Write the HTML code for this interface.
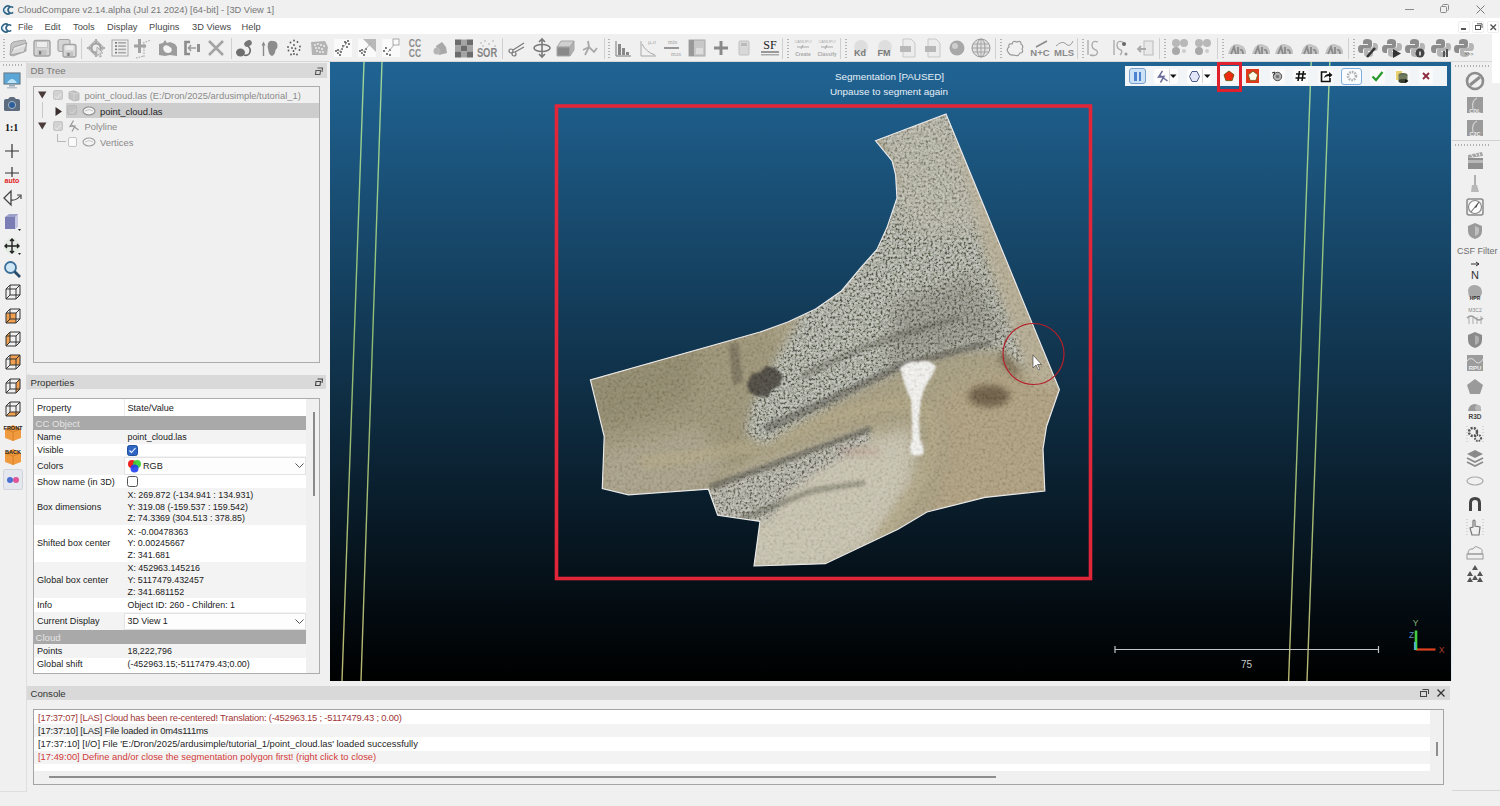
<!DOCTYPE html>
<html><head><meta charset="utf-8">
<style>
*{box-sizing:border-box;margin:0;padding:0}
html,body{width:1500px;height:806px;overflow:hidden;background:#f0f0f0;font-family:"Liberation Sans",sans-serif;font-size:9.4px;color:#1a1a1a}
.a{position:absolute}
.t{position:absolute;white-space:pre;line-height:1}
svg{position:absolute;overflow:visible}
#title{left:0;top:0;width:1500px;height:18px;background:#f0f0f0}
#menu{left:0;top:18px;width:1500px;height:16px;background:#fff}
#tb{left:0;top:34px;width:1492px;height:28px;background:#f0f0f0;border-bottom:1px solid #d8d8d8}
#tbw{left:1492px;top:34px;width:8px;height:49px;background:#fff}
#view{left:330px;top:62px;width:1121px;height:619px;background:linear-gradient(#206494,#000);overflow:hidden}
.hdr{position:absolute;background:#d9d9d9;color:#6e6e6e}
.vs{position:absolute;width:1px;background:#cfcfcf}
.dots{position:absolute;width:2px;background:repeating-linear-gradient(#b4b4b4 0 1px,transparent 1px 3px)}
.hdots{position:absolute;height:2px;background:repeating-linear-gradient(90deg,#b0b0b0 0 1px,transparent 1px 3px)}
.row{position:absolute;left:0;width:272px}
.pk{position:absolute;left:3px;white-space:pre;line-height:1}
.pv{position:absolute;left:93.5px;white-space:pre;line-height:1}
.con{position:absolute;left:4px;white-space:pre;line-height:1;font-size:9.38px}
</style></head><body>
<div id="title" class="a"></div>
<div id="menu" class="a"></div>
<div id="tb" class="a"></div>
<div id="tbw" class="a"></div>
<!-- title -->
<svg style="left:1.5px;top:4.5px" width="12" height="10" viewBox="0 0 12 10"><path d="M8.3 2A3.9 3.9 0 1 0 8.3 8" fill="none" stroke="#2f6386" stroke-width="1.7"/><path d="M11.2 2.6A3.1 3.1 0 1 0 11.2 7.4" fill="none" stroke="#2f6386" stroke-width="1.6"/><path d="M3 3.5Q2.6 5 3 6.5" stroke="#9fd4ee" stroke-width="0.9" fill="none"/></svg>
<div class="t" style="left:17.5px;top:5.8px;font-size:9.3px;color:#777">CloudCompare v2.14.alpha (Jul 21 2024) [64-bit] - [3D View 1]</div>
<div class="a" style="left:1405px;top:9px;width:9px;height:1px;background:#8a8a8a"></div>
<svg style="left:1440px;top:4px" width="10" height="10"><rect x="0.5" y="2.5" width="6" height="6" rx="1" fill="none" stroke="#8a8a8a"/><path d="M2.5 2.5V1.5Q2.5 0.5 3.5 0.5H7.5Q8.5 0.5 8.5 1.5V5.5Q8.5 6.5 7.5 6.5" fill="none" stroke="#8a8a8a"/></svg>
<svg style="left:1476px;top:5px" width="10" height="10"><path d="M0.5 0.5L8.5 8.5M8.5 0.5L0.5 8.5" stroke="#7a7a7a" stroke-width="1"/></svg>
<!-- menu -->
<svg style="left:-0.5px;top:22.5px" width="12" height="10" viewBox="0 0 12 10"><path d="M8.3 2A3.9 3.9 0 1 0 8.3 8" fill="none" stroke="#2f6386" stroke-width="1.7"/><path d="M11.2 2.6A3.1 3.1 0 1 0 11.2 7.4" fill="none" stroke="#2f6386" stroke-width="1.6"/><path d="M3 3.5Q2.6 5 3 6.5" stroke="#9fd4ee" stroke-width="0.9" fill="none"/></svg>
<div class="t" style="left:18px;top:22.5px;font-size:9.3px;color:#484848">File</div>
<div class="t" style="left:44.5px;top:22.5px;font-size:9.3px;color:#484848">Edit</div>
<div class="t" style="left:73px;top:22.5px;font-size:9.3px;color:#484848">Tools</div>
<div class="t" style="left:107px;top:22.5px;font-size:9.3px;color:#484848">Display</div>
<div class="t" style="left:149px;top:22.5px;font-size:9.3px;color:#484848">Plugins</div>
<div class="t" style="left:192px;top:22.5px;font-size:9.3px;color:#484848">3D Views</div>
<div class="t" style="left:241.5px;top:22.5px;font-size:9.3px;color:#484848">Help</div>
<div class="a" style="left:1458px;top:21px;width:12px;height:12px;background:#fff;border:1px solid #eee;border-radius:2px"></div>
<div class="a" style="left:1461px;top:28px;width:5px;height:2px;background:#555"></div>
<div class="a" style="left:1472px;top:21px;width:12px;height:12px;background:#fff;border:1px solid #eee;border-radius:2px"></div>
<svg style="left:1475px;top:23px" width="8" height="8"><rect x="0.5" y="2.5" width="5" height="4" fill="none" stroke="#555"/><path d="M2 0.8H7V5" fill="none" stroke="#555"/></svg>
<div class="a" style="left:1487px;top:21px;width:12px;height:12px;background:#fff;border:1px solid #eee;border-radius:2px"></div>
<svg style="left:1490px;top:24px" width="7" height="7"><path d="M0.5 0.5L6 6M6 0.5L0.5 6" stroke="#555" stroke-width="1.4"/></svg>
<svg style="left:8.0px;top:38.0px" width="20" height="20" viewBox="0 0 20 20"><path d="M3 6L5 4L10 3L17 2L18 4L18 13L5 18L2 17Z" fill="#c4c4c4" stroke="#a6a6a6" stroke-width="1"/><path d="M2 17L6 9L19 5L16 14Z" fill="#dcdcdc" stroke="#a4a4a4" stroke-width="1"/><path d="M6 11L17 7" stroke="#eeeeee" stroke-width="1.2"/></svg>
<svg style="left:32.0px;top:38.0px" width="20" height="20" viewBox="0 0 20 20"><rect x="2" y="2.5" width="16" height="15.5" rx="2" fill="#d4d4d4" stroke="#a2a2a2" stroke-width="1.4"/><rect x="4.5" y="3.5" width="11" height="6" fill="#ececec" stroke="#bdbdbd" stroke-width="0.8"/><rect x="5.5" y="12" width="9" height="5" fill="#c2c2c2"/><rect x="7" y="13" width="2.2" height="3.5" fill="#7c7c7c"/></svg>
<svg style="left:57.0px;top:38.0px" width="20" height="20" viewBox="0 0 20 20"><rect x="1" y="1.5" width="12" height="12" rx="2" fill="#d4d4d4" stroke="#a6a6a6" stroke-width="1.2"/><rect x="6" y="6.5" width="13" height="12.5" rx="2" fill="#d6d6d6" stroke="#a2a2a2" stroke-width="1.3"/><rect x="8.5" y="7.5" width="8" height="4.5" fill="#ececec"/><rect x="9" y="14" width="7" height="4" fill="#c2c2c2"/><rect x="10.5" y="15" width="2" height="3" fill="#7c7c7c"/></svg>
<svg style="left:86.0px;top:38.0px" width="20" height="20" viewBox="0 0 20 20"><path d="M10 1V5M10 15V19M1 10H5M15 10H19" stroke="#a8a8a8" stroke-width="2"/><path d="M10 2L18 10L10 18L2 10Z" fill="none" stroke="#b4b4b4" stroke-width="1.3"/><circle cx="10" cy="10" r="4.5" fill="#ececec" stroke="#a0a0a0" stroke-width="2"/><path d="M11 9L17 15L14 15.5L15.5 18.5L13.5 19L12.5 16L10.5 18Z" fill="#dedede" stroke="#a8a8a8" stroke-width="0.8"/></svg>
<svg style="left:110.0px;top:38.0px" width="20" height="20" viewBox="0 0 20 20"><rect x="2" y="2" width="16" height="16" fill="#eee" stroke="#a8a8a8"/><rect x="5" y="4.0" width="2" height="1.6" fill="#7a7a7a"/><rect x="8" y="4.0" width="8" height="1.6" fill="#a8a8a8"/><rect x="5" y="7.3" width="2" height="1.6" fill="#7a7a7a"/><rect x="8" y="7.3" width="8" height="1.6" fill="#a8a8a8"/><rect x="5" y="10.6" width="2" height="1.6" fill="#7a7a7a"/><rect x="8" y="10.6" width="8" height="1.6" fill="#a8a8a8"/><rect x="5" y="13.9" width="2" height="1.6" fill="#7a7a7a"/><rect x="8" y="13.9" width="8" height="1.6" fill="#a8a8a8"/></svg>
<svg style="left:133.0px;top:38.0px" width="20" height="20" viewBox="0 0 20 20"><path d="M6.5 1V15M1 8H13" stroke="#a2a2a2" stroke-width="3"/><path d="M10 5L18 2M11 6V19M3 20L11 18" stroke="#a8a8a8" stroke-width="1.1" stroke-dasharray="1.6 1.2"/></svg>
<svg style="left:158.0px;top:38.0px" width="20" height="20" viewBox="0 0 20 20"><path d="M1 17L1 6L5 5L7 2L9 5L12 4L17 6L19 9L19 18L12 17L7 18Z" fill="#9c9c9c"/><path d="M6 8Q9 6 12 9Q15 11 13 14Q10 16 7 14Q4 11 6 8Z" fill="#f4f4f4"/></svg>
<svg style="left:183.0px;top:38.0px" width="20" height="20" viewBox="0 0 20 20"><path d="M7 4H2.5V16H7" fill="none" stroke="#8c8c8c" stroke-width="2.6"/><path d="M5.5 10H13M8 7L5.5 10L8 13" fill="none" stroke="#9a9a9a" stroke-width="1.6"/><rect x="14" y="6" width="3" height="8" fill="#909090"/></svg>
<svg style="left:206.0px;top:38.0px" width="20" height="20" viewBox="0 0 20 20"><path d="M3 3L17 17M17 3L3 17" stroke="#a4a4a4" stroke-width="2.6"/></svg>
<svg style="left:235.0px;top:38.0px" width="20" height="20" viewBox="0 0 20 20"><ellipse cx="5.5" cy="14.5" rx="4.5" ry="4" fill="#6e6e6e"/><ellipse cx="13" cy="5.5" rx="4" ry="3" transform="rotate(-30 13 5.5)" fill="#767676"/><path d="M13 8Q17 12 14 16Q12 18 9 17" fill="none" stroke="#6e6e6e" stroke-width="1.6"/></svg>
<svg style="left:260.0px;top:38.0px" width="20" height="20" viewBox="0 0 20 20"><path d="M3.5 18V6" stroke="#8a8a8a" stroke-width="1.4"/><path d="M1.5 7.5L3.5 3.5L5.5 7.5Z" fill="#8a8a8a"/><path d="M8 5Q10 2 13 3Q17 3 17.5 7Q18 10 15.5 12Q15 17 12 18Q9 17 8.5 13Q7 9 8 5Z" fill="#8c8c8c"/></svg>
<svg style="left:284.0px;top:38.0px" width="20" height="20" viewBox="0 0 20 20"><circle cx="10" cy="2.5" r="0.9" fill="#555"/><circle cx="13.5" cy="4" r="0.9" fill="#555"/><circle cx="6.5" cy="4.5" r="0.9" fill="#555"/><circle cx="4" cy="9" r="0.9" fill="#555"/><circle cx="16" cy="8.5" r="0.9" fill="#555"/><circle cx="4.5" cy="12.5" r="0.9" fill="#555"/><circle cx="15.5" cy="12" r="0.9" fill="#555"/><circle cx="7" cy="16.5" r="0.9" fill="#555"/><circle cx="10" cy="16" r="0.9" fill="#555"/><circle cx="13" cy="16.5" r="0.9" fill="#555"/><circle cx="8" cy="10" r="0.9" fill="#555"/><circle cx="11.5" cy="10.5" r="0.9" fill="#555"/><circle cx="10" cy="7" r="0.9" fill="#555"/><circle cx="9.5" cy="13" r="0.9" fill="#555"/></svg>
<svg style="left:309.0px;top:38.0px" width="20" height="20" viewBox="0 0 20 20"><path d="M2 4L16 3L19 9L18 17L3 17Z" fill="#b4b4b4"/><circle cx="6" cy="7" r="1" fill="#eeeeee"/><circle cx="9" cy="6" r="1" fill="#eeeeee"/><circle cx="12" cy="7" r="1" fill="#eeeeee"/><circle cx="15" cy="8" r="1" fill="#eeeeee"/><circle cx="7" cy="10" r="1" fill="#eeeeee"/><circle cx="10" cy="10" r="1" fill="#eeeeee"/><circle cx="13" cy="11" r="1" fill="#eeeeee"/><circle cx="8" cy="13" r="1" fill="#eeeeee"/><circle cx="11" cy="14" r="1" fill="#eeeeee"/><circle cx="14" cy="14" r="1" fill="#eeeeee"/></svg>
<svg style="left:333.0px;top:38.0px" width="20" height="20" viewBox="0 0 20 20"><rect x="1" y="1" width="18" height="18" fill="#fafafa"/><circle cx="3" cy="13" r="1" fill="#555"/><circle cx="5" cy="15" r="1" fill="#555"/><circle cx="7" cy="17" r="1" fill="#555"/><circle cx="5" cy="12" r="1" fill="#555"/><circle cx="9" cy="11" r="1" fill="#555"/><circle cx="10" cy="8" r="1" fill="#555"/><circle cx="13" cy="5" r="1" fill="#555"/><circle cx="15" cy="3" r="1" fill="#555"/><circle cx="12" cy="4" r="1" fill="#555"/><circle cx="16" cy="6" r="1" fill="#555"/><circle cx="14" cy="9" r="1" fill="#555"/><circle cx="8" cy="14" r="1" fill="#555"/><path d="M5 15L14 5" stroke="#a8a8a8"/></svg>
<svg style="left:357.0px;top:38.0px" width="20" height="20" viewBox="0 0 20 20"><rect x="1" y="1" width="18" height="18" fill="#fafafa"/><path d="M6 1H19V14Z" fill="#b8b8b8"/><circle cx="3" cy="13" r="1" fill="#555"/><circle cx="5" cy="15" r="1" fill="#555"/><circle cx="7" cy="17" r="1" fill="#555"/><circle cx="5" cy="12" r="1" fill="#555"/><circle cx="9" cy="11" r="1" fill="#555"/><circle cx="8" cy="14" r="1" fill="#555"/><path d="M5 15L14 5" stroke="#a8a8a8"/></svg>
<svg style="left:381.0px;top:38.0px" width="20" height="20" viewBox="0 0 20 20"><rect x="1" y="1" width="18" height="18" fill="#fafafa"/><rect x="12" y="1" width="6" height="6" fill="none" stroke="#a8a8a8"/><circle cx="3" cy="13" r="1" fill="#555"/><circle cx="6" cy="16" r="1" fill="#555"/><circle cx="9" cy="17" r="1" fill="#555"/><circle cx="5" cy="10" r="1" fill="#555"/><circle cx="9" cy="12" r="1" fill="#555"/><path d="M7 14L13 7" stroke="#a8a8a8"/></svg>
<svg style="left:405.0px;top:38.0px" width="20" height="20" viewBox="0 0 20 20"><text x="10" y="9.5" font-size="10" font-weight="bold" text-anchor="middle" fill="#8a8a8a" font-family="Liberation Sans" transform="translate(10 0) scale(0.85 1) translate(-10 0)">CC</text><text x="10" y="19" font-size="10" font-weight="bold" text-anchor="middle" fill="#8a8a8a" font-family="Liberation Sans" transform="translate(10 0) scale(0.85 1) translate(-10 0)">CC</text></svg>
<svg style="left:430.0px;top:38.0px" width="20" height="20" viewBox="0 0 20 20"><path d="M6 8L12 4L16 9L17 15L9 17Z" fill="#a8a8a8"/><circle cx="7" cy="13" r="3.5" fill="#b5b5b5"/></svg>
<svg style="left:454.0px;top:38.0px" width="20" height="20" viewBox="0 0 20 20"><rect x="1" y="1.5" width="6" height="6" fill="#6c6c6c"/><rect x="1" y="7.5" width="6" height="6" fill="#a4a4a4"/><rect x="1" y="13.5" width="6" height="6" fill="#6c6c6c"/><rect x="7" y="1.5" width="6" height="6" fill="#a4a4a4"/><rect x="7" y="7.5" width="6" height="6" fill="#6c6c6c"/><rect x="7" y="13.5" width="6" height="6" fill="#a4a4a4"/><rect x="13" y="1.5" width="6" height="6" fill="#6c6c6c"/><rect x="13" y="7.5" width="6" height="6" fill="#a4a4a4"/><rect x="13" y="13.5" width="6" height="6" fill="#6c6c6c"/></svg>
<svg style="left:477.0px;top:38.0px" width="20" height="20" viewBox="0 0 20 20"><text x="10" y="19" font-size="12" font-weight="bold" text-anchor="middle" fill="#858585" font-family="Liberation Sans" transform="translate(10 0) scale(0.78 1) translate(-10 0)">SOR</text><circle cx="4" cy="5" r="0.7" fill="#9a9a9a"/><circle cx="8" cy="3" r="0.7" fill="#9a9a9a"/><circle cx="12" cy="6" r="0.7" fill="#9a9a9a"/><circle cx="16" cy="3" r="0.7" fill="#9a9a9a"/><circle cx="18" cy="8" r="0.7" fill="#9a9a9a"/><circle cx="6" cy="8" r="0.7" fill="#9a9a9a"/></svg>
<svg style="left:507.0px;top:38.0px" width="20" height="20" viewBox="0 0 20 20"><circle cx="4" cy="13" r="2" fill="none" stroke="#7a7a7a" stroke-width="1.2"/><circle cx="7" cy="16" r="2" fill="none" stroke="#7a7a7a" stroke-width="1.2"/><path d="M6 12L17 5M8 14L17 9" stroke="#7a7a7a" stroke-width="1.2"/></svg>
<svg style="left:532.0px;top:38.0px" width="20" height="20" viewBox="0 0 20 20"><path d="M10 1V19M7 4L10 1L13 4M7 16L10 19L13 16" fill="none" stroke="#7a7a7a" stroke-width="1.6"/><ellipse cx="10" cy="10" rx="8" ry="3.5" fill="none" stroke="#7a7a7a" stroke-width="1.6"/></svg>
<svg style="left:555.0px;top:38.0px" width="20" height="20" viewBox="0 0 20 20"><path d="M2 9L6 3H19L15 9Z" fill="#d0d0d0" stroke="#a8a8a8"/><path d="M2 9H15V18H2Z" fill="#8a8a8a" stroke="#a8a8a8"/><path d="M15 9L19 3V12L15 18Z" fill="#b0b0b0" stroke="#a8a8a8"/></svg>
<svg style="left:580.0px;top:38.0px" width="20" height="20" viewBox="0 0 20 20"><path d="M5 17L9 9L14 14L17 10M9 9L8 3M9 9L3 12" fill="none" stroke="#a8a8a8" stroke-width="1.8"/></svg>
<svg style="left:613.0px;top:38.0px" width="20" height="20" viewBox="0 0 20 20"><path d="M3 3V18H18" fill="none" stroke="#7a7a7a" stroke-width="1"/><rect x="5" y="6" width="3" height="11" fill="#888"/><rect x="9" y="10" width="3" height="7" fill="#888"/><rect x="13" y="14" width="3" height="3" fill="#888"/></svg>
<svg style="left:638.0px;top:38.0px" width="20" height="20" viewBox="0 0 20 20"><path d="M3 3V18H18" fill="none" stroke="#a8a8a8" stroke-width="1"/><path d="M4 6Q8 14 17 17" fill="none" stroke="#a8a8a8"/><text x="10" y="6" font-size="6" fill="#a8a8a8" font-family="Liberation Serif">μ,σ</text></svg>
<svg style="left:662.0px;top:38.0px" width="20" height="20" viewBox="0 0 20 20"><text x="6" y="6" font-size="6" fill="#a8a8a8" font-family="Liberation Serif">min</text><path d="M2 10H17" stroke="#7a7a7a" stroke-width="1.5"/><text x="9" y="18" font-size="6" fill="#a8a8a8" font-family="Liberation Serif">max</text></svg>
<svg style="left:687.0px;top:38.0px" width="20" height="20" viewBox="0 0 20 20"><rect x="2" y="2" width="16" height="16" fill="#c8c8c8" stroke="#a8a8a8"/><rect x="2" y="2" width="5" height="16" fill="#999"/><rect x="9" y="10" width="7" height="6" fill="#ddd"/></svg>
<svg style="left:711.0px;top:38.0px" width="20" height="20" viewBox="0 0 20 20"><path d="M10 3V17M3 10H17" stroke="#8a8a8a" stroke-width="3"/></svg>
<svg style="left:734.0px;top:38.0px" width="20" height="20" viewBox="0 0 20 20"><rect x="5" y="3" width="10" height="14" rx="1" fill="#d8d8d8" stroke="#c0c0c0"/><rect x="7" y="5" width="6" height="3" fill="#bbb"/></svg>
<svg style="left:760.0px;top:38.0px" width="20" height="20" viewBox="0 0 20 20"><text x="10" y="11" font-size="12" text-anchor="middle" fill="#222" font-family="Liberation Serif">SF</text><rect x="1" y="13" width="18" height="2" fill="#999"/><rect x="1" y="16" width="18" height="1.5" fill="#aaa"/></svg>
<svg style="left:793.0px;top:38.0px" width="20" height="20" viewBox="0 0 20 20"><text x="10" y="5" font-size="4" text-anchor="middle" fill="#aaa" font-family="Liberation Sans">CANUPO</text><path d="M4 9H16M10 7L8 11" stroke="#a8a8a8"/><text x="10" y="18" font-size="5" font-weight="bold" text-anchor="middle" fill="#a8a8a8" font-family="Liberation Sans">Create</text></svg>
<svg style="left:817.0px;top:38.0px" width="20" height="20" viewBox="0 0 20 20"><text x="10" y="5" font-size="4" text-anchor="middle" fill="#aaa" font-family="Liberation Sans">CANUPO</text><path d="M4 9H16M10 7L8 11" stroke="#a8a8a8"/><text x="10" y="18" font-size="5" font-weight="bold" text-anchor="middle" fill="#a8a8a8" font-family="Liberation Sans">Classify</text></svg>
<svg style="left:850.0px;top:38.0px" width="20" height="20" viewBox="0 0 20 20"><circle cx="11" cy="9" r="7" fill="#dedede"/><text x="10" y="18" font-size="9" font-weight="bold" text-anchor="middle" fill="#7a7a7a" font-family="Liberation Sans">Kd</text></svg>
<svg style="left:874.0px;top:38.0px" width="20" height="20" viewBox="0 0 20 20"><circle cx="11" cy="9" r="7" fill="#dedede"/><text x="10" y="18" font-size="9" font-weight="bold" text-anchor="middle" fill="#7a7a7a" font-family="Liberation Sans">FM</text></svg>
<svg style="left:898.0px;top:38.0px" width="20" height="20" viewBox="0 0 20 20"><path d="M5 1H13L17 5V19H5Z" fill="#ececec" stroke="#c8c8c8"/><rect x="2" y="8" width="11" height="6" fill="#b8b8b8"/></svg>
<svg style="left:923.0px;top:38.0px" width="20" height="20" viewBox="0 0 20 20"><path d="M5 1H13L17 5V19H5Z" fill="#ececec" stroke="#c8c8c8"/><rect x="2" y="8" width="11" height="6" fill="#b8b8b8"/></svg>
<svg style="left:947.0px;top:38.0px" width="20" height="20" viewBox="0 0 20 20"><circle cx="10" cy="10" r="7.5" fill="#a8a8a8"/><circle cx="8" cy="8" r="3" fill="#cfcfcf"/></svg>
<svg style="left:971.0px;top:38.0px" width="20" height="20" viewBox="0 0 20 20"><circle cx="10" cy="10" r="9" fill="#e0e0e0" stroke="#9a9a9a"/><ellipse cx="10" cy="10" rx="4" ry="9" fill="none" stroke="#9a9a9a"/><path d="M1 10H19M2 6H18M2 14H18M10 1V19" stroke="#9a9a9a" stroke-width="0.8"/></svg>
<svg style="left:1005.0px;top:38.0px" width="20" height="20" viewBox="0 0 20 20"><path d="M3 14Q1 11 4 9Q3 5 7 6Q8 2 12 4Q16 2 16 6Q19 8 17 11Q19 15 15 15Q13 19 9 17Q5 18 3 14Z" fill="none" stroke="#9a9a9a" stroke-width="1.2"/></svg>
<svg style="left:1030.0px;top:38.0px" width="20" height="20" viewBox="0 0 20 20"><text x="10" y="18" font-size="9.5" font-weight="bold" text-anchor="middle" fill="#8a8a8a" font-family="Liberation Sans">N+C</text><path d="M6 9L17 3" stroke="#8a8a8a" stroke-width="1.5"/></svg>
<svg style="left:1054.0px;top:38.0px" width="20" height="20" viewBox="0 0 20 20"><text x="10" y="18" font-size="9.5" font-weight="bold" text-anchor="middle" fill="#8a8a8a" font-family="Liberation Sans">MLS</text><path d="M2 8Q8 2 12 6T19 3" fill="none" stroke="#9a9a9a"/></svg>
<svg style="left:1084.0px;top:38.0px" width="20" height="20" viewBox="0 0 20 20"><path d="M4 2V17M14 4Q8 2 8 7Q8 11 12 12Q15 14 12 17Q10 18 6 17" fill="none" stroke="#a8a8a8" stroke-width="1.3"/></svg>
<svg style="left:1110.0px;top:38.0px" width="20" height="20" viewBox="0 0 20 20"><path d="M4 2V17M13 4Q7 2 7 7Q7 11 11 12Q13 14 10 17" fill="none" stroke="#a8a8a8" stroke-width="1.3"/><circle cx="14" cy="6" r="2" fill="#666"/><circle cx="16" cy="16" r="1.5" fill="#999"/></svg>
<svg style="left:1136.0px;top:38.0px" width="20" height="20" viewBox="0 0 20 20"><rect x="8" y="3" width="9" height="14" fill="#e8e8e8" stroke="#bbb"/><path d="M2 11L10 11M5 8L2 11L5 14" fill="none" stroke="#aaa" stroke-width="1.8"/></svg>
<svg style="left:1170.0px;top:38.0px" width="20" height="20" viewBox="0 0 20 20"><circle cx="6" cy="5" r="4" fill="#b8b8b8"/><circle cx="14" cy="5" r="4" fill="#b8b8b8"/><circle cx="6" cy="13" r="4" fill="#a8a8a8"/><circle cx="14" cy="13" r="2" fill="#ccc"/></svg>
<svg style="left:1193.0px;top:38.0px" width="20" height="20" viewBox="0 0 20 20"><circle cx="6" cy="5" r="4" fill="#b8b8b8"/><circle cx="14" cy="5" r="4" fill="#b8b8b8"/><circle cx="6" cy="13" r="4" fill="#a8a8a8"/><circle cx="14" cy="13" r="2" fill="#ccc"/></svg>
<svg style="left:1227.0px;top:38.0px" width="20" height="20" viewBox="0 0 20 20"><path d="M1 16Q3 8 7 7Q10 5 13 7Q17 7 19 13L19 16Z" fill="#c4c4c4"/><path d="M4 16L7 9L9 16M11 9V16M13 12Q16 11 16 16" fill="none" stroke="#8a8a8a" stroke-width="1.8"/></svg>
<svg style="left:1251.0px;top:38.0px" width="20" height="20" viewBox="0 0 20 20"><path d="M1 16Q3 8 7 7Q10 5 13 7Q17 7 19 13L19 16Z" fill="#c4c4c4"/><path d="M4 16L7 9L9 16M11 9V16M13 12Q16 11 16 16" fill="none" stroke="#8a8a8a" stroke-width="1.8"/></svg>
<svg style="left:1274.0px;top:38.0px" width="20" height="20" viewBox="0 0 20 20"><path d="M1 16Q3 8 7 7Q10 5 13 7Q17 7 19 13L19 16Z" fill="#c4c4c4"/><path d="M4 16L7 9L9 16M11 9V16M13 12Q16 11 16 16" fill="none" stroke="#8a8a8a" stroke-width="1.8"/></svg>
<svg style="left:1300.0px;top:38.0px" width="20" height="20" viewBox="0 0 20 20"><path d="M1 16Q3 8 7 7Q10 5 13 7Q17 7 19 13L19 16Z" fill="#c4c4c4"/><path d="M4 16L7 9L9 16M11 9V16M13 12Q16 11 16 16" fill="none" stroke="#8a8a8a" stroke-width="1.8"/></svg>
<svg style="left:1324.0px;top:38.0px" width="20" height="20" viewBox="0 0 20 20"><path d="M1 16Q3 8 7 7Q10 5 13 7Q17 7 19 13L19 16Z" fill="#c4c4c4"/><path d="M4 16L7 9L9 16M11 9V16M13 12Q16 11 16 16" fill="none" stroke="#8a8a8a" stroke-width="1.8"/></svg>
<svg style="left:1358.0px;top:38.0px" width="20" height="20" viewBox="0 0 20 20"><path d="M9 1Q5 1 5 4V6H10V7H3Q0 7 0 11Q0 15 3 15H5V12Q5 10 8 10H12Q14 10 14 8V4Q14 1 9 1Z" fill="#8c8c8c"/><path d="M11 19Q15 19 15 16V14H10V13H17Q20 13 20 9Q20 5 17 5H15V8Q15 10 12 10H8Q6 10 6 12V16Q6 19 11 19Z" fill="#b4b4b4"/><path d="M9 19L17 10" stroke="#333" stroke-width="2.5"/></svg>
<svg style="left:1382.0px;top:38.0px" width="20" height="20" viewBox="0 0 20 20"><path d="M9 1Q5 1 5 4V6H10V7H3Q0 7 0 11Q0 15 3 15H5V12Q5 10 8 10H12Q14 10 14 8V4Q14 1 9 1Z" fill="#8c8c8c"/><path d="M11 19Q15 19 15 16V14H10V13H17Q20 13 20 9Q20 5 17 5H15V8Q15 10 12 10H8Q6 10 6 12V16Q6 19 11 19Z" fill="#b4b4b4"/><path d="M11 11V20L19 15.5Z" fill="#333"/></svg>
<svg style="left:1405.0px;top:38.0px" width="20" height="20" viewBox="0 0 20 20"><path d="M9 1Q5 1 5 4V6H10V7H3Q0 7 0 11Q0 15 3 15H5V12Q5 10 8 10H12Q14 10 14 8V4Q14 1 9 1Z" fill="#8c8c8c"/><path d="M11 19Q15 19 15 16V14H10V13H17Q20 13 20 9Q20 5 17 5H15V8Q15 10 12 10H8Q6 10 6 12V16Q6 19 11 19Z" fill="#b4b4b4"/><circle cx="15" cy="15" r="4.5" fill="#444"/><rect x="14.3" y="13.5" width="1.4" height="4" fill="#fff"/></svg>
<svg style="left:1431.0px;top:38.0px" width="20" height="20" viewBox="0 0 20 20"><path d="M9 1Q5 1 5 4V6H10V7H3Q0 7 0 11Q0 15 3 15H5V12Q5 10 8 10H12Q14 10 14 8V4Q14 1 9 1Z" fill="#8c8c8c"/><path d="M11 19Q15 19 15 16V14H10V13H17Q20 13 20 9Q20 5 17 5H15V8Q15 10 12 10H8Q6 10 6 12V16Q6 19 11 19Z" fill="#b4b4b4"/><rect x="12" y="13" width="2" height="6" fill="#555"/><rect x="15" y="11" width="2" height="8" fill="#555"/></svg>
<svg style="left:1454.0px;top:38.0px" width="20" height="20" viewBox="0 0 20 20"><path d="M9 1Q5 1 5 4V6H10V7H3Q0 7 0 11Q0 15 3 15H5V12Q5 10 8 10H12Q14 10 14 8V4Q14 1 9 1Z" fill="#8c8c8c"/><path d="M11 19Q15 19 15 16V14H10V13H17Q20 13 20 9Q20 5 17 5H15V8Q15 10 12 10H8Q6 10 6 12V16Q6 19 11 19Z" fill="#b4b4b4"/><text x="15" y="18" font-size="5" text-anchor="middle" fill="#555" font-family="Liberation Sans">&gt;&gt;&gt;</text></svg>
<div class="vs" style="left:604px;top:38px;height:21px"></div>
<div class="vs" style="left:81px;top:38px;height:21px"></div>
<div class="vs" style="left:231px;top:38px;height:21px"></div>
<div class="vs" style="left:502px;top:38px;height:21px"></div>
<div class="vs" style="left:782px;top:38px;height:21px"></div>
<div class="vs" style="left:840px;top:38px;height:21px"></div>
<div class="vs" style="left:995px;top:38px;height:21px"></div>
<div class="vs" style="left:1077px;top:38px;height:21px"></div>
<div class="vs" style="left:1159px;top:38px;height:21px"></div>
<div class="vs" style="left:1217px;top:38px;height:21px"></div>
<div class="vs" style="left:1348px;top:38px;height:21px"></div>
<div class="dots" style="left:3px;top:39px;height:19px"></div>
<div class="dots" style="left:608px;top:39px;height:19px"></div>
<div class="dots" style="left:787px;top:39px;height:19px"></div>
<div class="dots" style="left:845px;top:39px;height:19px"></div>
<div class="dots" style="left:1000px;top:39px;height:19px"></div>
<div class="dots" style="left:1082px;top:39px;height:19px"></div>
<div class="dots" style="left:1164px;top:39px;height:19px"></div>
<div class="dots" style="left:1222px;top:39px;height:19px"></div>
<div class="dots" style="left:1353px;top:39px;height:19px"></div>
<!-- left toolbar -->
<div class="a" style="left:26px;top:62px;width:1px;height:729px;background:#dedede"></div>
<div class="a" style="left:0;top:791px;width:27px;height:1px;background:#dedede"></div>
<div class="hdots" style="left:3px;top:64px;width:20px"></div>
<svg style="left:3px;top:72px" width="18" height="17" viewBox="0 0 18 17"><rect x="1" y="1" width="16" height="11" fill="#5aa6d6" stroke="#6a7f90" stroke-width="1.2"/><path d="M4 11Q9 3 14 11" fill="#bfe3f7"/><rect x="6" y="13" width="6" height="1.5" fill="#9aaab5"/><rect x="4" y="15" width="10" height="1.5" fill="#b5c0c8"/></svg>
<svg style="left:3px;top:96px" width="18" height="16" viewBox="0 0 18 16"><path d="M1 5Q1 3 3 3H5L7 1H11L13 3H15Q17 3 17 5V14Q17 15 15 15H3Q1 15 1 14Z" fill="#5c6b7d"/><circle cx="9" cy="9" r="3.6" fill="#2d5e9a" stroke="#a9b7c5" stroke-width="1"/></svg>
<div class="t" style="left:5px;top:123px;font-size:10px;font-weight:bold;font-family:'Liberation Serif';color:#111">1:1</div>
<svg style="left:4px;top:143px" width="16" height="16"><path d="M8 1V15M1 8H15" stroke="#333" stroke-width="1.2"/></svg>
<svg style="left:4px;top:167px" width="16" height="16"><path d="M8 0V10M1 6H15" stroke="#333" stroke-width="1.2"/><text x="8" y="15.5" font-size="7" font-weight="bold" text-anchor="middle" fill="#e02020" font-family="Liberation Sans">auto</text></svg>
<svg style="left:3px;top:190px" width="19" height="16"><path d="M8 1V15L1 8Z" fill="none" stroke="#444" stroke-width="1.3"/><path d="M8 10Q13 11 17 6M14 5H18V9" fill="none" stroke="#444" stroke-width="1.2"/></svg>
<svg style="left:3px;top:213px" width="19" height="19"><path d="M2 4L6 1H15V13L12 16H2Z" fill="#9d9fc8"/><path d="M2 4H12V16H2Z" fill="#7b7db5"/><path d="M12 4L15 1V13L12 16Z" fill="#c6c7e2"/><path d="M15 16L18 16L16.5 18Z" fill="#222"/></svg>
<svg style="left:3px;top:237px" width="19" height="19"><circle cx="9" cy="9" r="8" fill="#e3ebe3"/><path d="M9 2V16M2 9H16M7 4L9 2L11 4M7 14L9 16L11 14M4 7L2 9L4 11M14 7L16 9L14 11" fill="none" stroke="#222" stroke-width="1.4"/><path d="M15 16L18 16L16.5 18Z" fill="#222"/></svg>
<svg style="left:3px;top:260px" width="19" height="19"><circle cx="7.5" cy="7.5" r="5.5" fill="#cfe6f5" stroke="#3b6f9a" stroke-width="1.8"/><path d="M11.5 11.5L17 17" stroke="#2a4a6a" stroke-width="2.8"/></svg>
<svg style="left:4px;top:283px" width="18" height="18" viewBox="0 0 18 18"><path d="M2 6H12V16H2ZM6 2H16V12H6ZM2 6L6 2M12 6L16 2M12 16L16 12M2 16L6 12" fill="none" stroke="#333" stroke-width="1"/></svg>
<svg style="left:4px;top:307px" width="18" height="18" viewBox="0 0 18 18"><path d="M2 6H12V16H2Z" fill="#f0a050"/><path d="M2 6H12V16H2ZM6 2H16V12H6ZM2 6L6 2M12 6L16 2M12 16L16 12M2 16L6 12" fill="none" stroke="#333" stroke-width="1"/></svg>
<svg style="left:4px;top:330px" width="18" height="18" viewBox="0 0 18 18"><path d="M2 6L6 2V12L2 16Z" fill="#f0a050"/><path d="M2 6H12V16H2ZM6 2H16V12H6ZM2 6L6 2M12 6L16 2M12 16L16 12M2 16L6 12" fill="none" stroke="#333" stroke-width="1"/></svg>
<svg style="left:4px;top:353px" width="18" height="18" viewBox="0 0 18 18"><path d="M6 2H16V12H6Z" fill="#f0a050"/><path d="M2 6H12V16H2ZM6 2H16V12H6ZM2 6L6 2M12 6L16 2M12 16L16 12M2 16L6 12" fill="none" stroke="#333" stroke-width="1"/></svg>
<svg style="left:4px;top:377px" width="18" height="18" viewBox="0 0 18 18"><path d="M12 6L16 2V12L12 16Z" fill="#f0a050"/><path d="M2 6H12V16H2ZM6 2H16V12H6ZM2 6L6 2M12 6L16 2M12 16L16 12M2 16L6 12" fill="none" stroke="#333" stroke-width="1"/></svg>
<svg style="left:4px;top:400px" width="18" height="18" viewBox="0 0 18 18"><path d="M2 16L6 12H16L12 16Z" fill="#f0a050"/><path d="M2 6H12V16H2ZM6 2H16V12H6ZM2 6L6 2M12 6L16 2M12 16L16 12M2 16L6 12" fill="none" stroke="#333" stroke-width="1"/></svg>
<svg style="left:3px;top:422px" width="20" height="20" viewBox="0 0 20 20"><path d="M2 7L10 3L18 7V16L10 19L2 16Z" fill="#f09a40"/><path d="M2 7L10 10L18 7M10 10V19" fill="none" stroke="#d07a20" stroke-width="0.8"/><text x="10" y="8" font-size="5.5" font-weight="bold" text-anchor="middle" fill="#222" font-family="Liberation Sans">FRONT</text></svg>
<svg style="left:3px;top:446px" width="20" height="20" viewBox="0 0 20 20"><path d="M2 7L10 3L18 7V16L10 19L2 16Z" fill="#f09a40"/><path d="M2 7L10 10L18 7M10 10V19" fill="none" stroke="#d07a20" stroke-width="0.8"/><text x="10" y="8" font-size="5.5" font-weight="bold" text-anchor="middle" fill="#222" font-family="Liberation Sans">BACK</text></svg>
<div class="a" style="left:3px;top:469px;width:20px;height:21px;background:#e4e8ee;border:1px solid #d2d6dc;border-radius:2px"></div><div class="a" style="left:6.5px;top:477px;width:6px;height:6px;border-radius:50%;background:#4b6fd0"></div><div class="a" style="left:13px;top:477px;width:6px;height:6px;border-radius:50%;background:#e0559a"></div>
<!-- DB tree dock -->
<div class="hdr" style="left:26px;top:63px;width:301px;height:15px"></div>
<div class="t" style="left:30.5px;top:66px;font-size:9.6px;color:#777">DB Tree</div>
<svg style="left:315px;top:66.5px" width="8" height="8"><path d="M1 3.5H5.5L5 7.5H0.5Z" fill="none" stroke="#555" stroke-width="1.1"/><path d="M2.5 1H7.5L7 5" fill="none" stroke="#555" stroke-width="1.1"/></svg>
<div class="a" style="left:33px;top:86px;width:287px;height:277px;border:1px solid #acacac;background:#f0f0f0"></div>
<div class="a" style="left:66px;top:103px;width:253px;height:15px;background:#cdcdcd"></div>
<svg style="left:38px;top:91px" width="9" height="8"><path d="M0 0.5H8.5L4.25 7.5Z" fill="#4b3b3b"/></svg>
<svg style="left:38px;top:122px" width="9" height="8"><path d="M0 0.5H8.5L4.25 7.5Z" fill="#4b3b3b"/></svg>
<svg style="left:55px;top:106.5px" width="8" height="9"><path d="M0.5 0H7.5L0.5 0Z M0.5 0L7 4.5L0.5 9Z" fill="#3b2e2e"/></svg>
<div class="a" style="left:42px;top:102px;width:1px;height:16px;background:#c8c8c8"></div>
<div class="a" style="left:57px;top:134px;width:1px;height:8px;background:#b8b8b8"></div>
<div class="a" style="left:57px;top:141px;width:9px;height:1px;background:#b8b8b8"></div>
<!-- checkboxes -->
<div class="a" style="left:52.5px;top:90px;width:10px;height:10px;background:#d2d2d2;border:1px solid #c6c6c6;border-radius:2px"></div>
<div class="a" style="left:52.5px;top:121px;width:10px;height:10px;background:#d2d2d2;border:1px solid #c6c6c6;border-radius:2px"></div>
<div class="a" style="left:67px;top:105px;width:10px;height:10px;background:#c2c2c2;border:1px solid #bababa;border-radius:2px"></div>
<div class="a" style="left:67.5px;top:137px;width:9.5px;height:10px;background:#fafafa;border:1px solid #c4c4c4;border-radius:2px"></div>
<svg style="left:54px;top:93px" width="8" height="7"><path d="M1 3.5L3 5.5L7 1" fill="none" stroke="#ececec" stroke-width="1"/></svg>
<svg style="left:54px;top:124px" width="8" height="7"><path d="M1 3.5L3 5.5L7 1" fill="none" stroke="#ececec" stroke-width="1"/></svg>
<svg style="left:68.5px;top:108px" width="8" height="7"><path d="M1 3.5L3 5.5L7 1" fill="none" stroke="#dadada" stroke-width="1"/></svg>
<svg style="left:67.5px;top:89.5px" width="12" height="11"><path d="M1 2L6 0.8L11 3V10L6 11L1 8.5Z" fill="#c4c4c4" stroke="#b0b0b0" stroke-width="0.8"/><path d="M1 2L6 4L11 3M6 4V11" fill="none" stroke="#d8d8d8" stroke-width="0.8"/></svg>
<svg style="left:82px;top:105.5px" width="14" height="10"><ellipse cx="7" cy="5" rx="6" ry="4" fill="#f4f4f4" stroke="#8c8c8c" stroke-width="1.1"/><path d="M3 5Q7 2 11 5" fill="none" stroke="#c0c0c0"/></svg>
<svg style="left:82px;top:137px" width="14" height="10"><ellipse cx="7" cy="5" rx="6" ry="4" fill="#f4f4f4" stroke="#9c9c9c" stroke-width="1.1"/><path d="M3 5Q7 2 11 5" fill="none" stroke="#c8c8c8"/></svg>
<svg style="left:68px;top:120px" width="12" height="12"><path d="M5.5 0.5L2 6.5L7 6L4 11.5M3 4.5L10.5 10" fill="none" stroke="#9a9a9a" stroke-width="1.2"/></svg>
<div class="t" style="left:84.5px;top:91px;font-size:9.4px;color:#8a8a8a">point_cloud.las (E:/Dron/2025/ardusimple/tutorial_1)</div>
<div class="t" style="left:100px;top:106.5px;font-size:9.4px;color:#1e1e1e">point_cloud.las</div>
<div class="t" style="left:84.5px;top:122px;font-size:9.4px;color:#8a8a8a">Polyline</div>
<div class="t" style="left:100px;top:137.5px;font-size:9.4px;color:#8a8a8a">Vertices</div>
<!-- splitter handle -->
<div class="a" style="left:27px;top:374px;width:3px;height:16px;background:#e2e2e2"></div>
<!-- Properties dock -->
<div class="hdr" style="left:26px;top:375px;width:300px;height:14px"></div>
<div class="t" style="left:30.5px;top:377.5px;font-size:9.6px;color:#333">Properties</div>
<svg style="left:315px;top:378px" width="8" height="8"><path d="M1 3.5H5.5L5 7.5H0.5Z" fill="none" stroke="#444" stroke-width="1.1"/><path d="M2.5 1H7.5L7 5" fill="none" stroke="#444" stroke-width="1.1"/></svg>
<div class="a" style="left:33px;top:398px;width:287px;height:276px;border:1px solid #acacac;background:#f0f0f0;overflow:hidden">
 <div class="a" style="left:0;top:0;width:272px;height:274px;background:#fff"></div>
 <div class="row" style="top:0px;height:17.4px;background:#fff"></div>
 <div class="pk" style="top:4.5px;font-size:9.1px">Property</div>
 <div class="pv" style="top:4.5px;font-size:9.1px">State/Value</div>
 <div class="row" style="top:17.4px;height:13.2px;background:#a9a9a9"></div>
 <div class="pk" style="left:1.5px;top:19.8px;color:#e4e4e4;font-size:9.6px">CC Object</div>
 <div class="row" style="top:30.6px;height:14.0px;background:#f3f3f3"></div>
 <div class="pk" style="top:33.5px;font-size:9.1px">Name</div>
 <div class="pv" style="top:33.5px;font-size:8.9px">point_cloud.las</div>
 <div class="row" style="top:44.6px;height:12.8px;background:#fff"></div>
 <div class="pk" style="top:46.9px;font-size:9.1px">Visible</div>
 <svg style="left:93px;top:45.8px" width="11" height="11"><rect x="0.5" y="0.5" width="10" height="10" rx="2" fill="#2f66c4" stroke="#1f4f9e"/><path d="M2.5 5.5L4.5 7.5L8.5 3" fill="none" stroke="#fff" stroke-width="1.1"/></svg>
 <div class="row" style="top:57.4px;height:18.6px;background:#f3f3f3"></div>
 <div class="a" style="left:89.5px;top:57.9px;width:182.5px;height:18.1px;background:#fdfdfd;border:1px solid #e3e3e3"></div>
 <div class="pk" style="top:62.5px;font-size:9.1px">Colors</div>
 <div class="pv" style="left:109px;top:62.5px;font-size:9.1px">RGB</div>
 <svg style="left:93px;top:59.9px" width="15" height="15"><circle cx="5" cy="5" r="4" fill="#f02020"/><circle cx="10" cy="5" r="4" fill="#30d030" opacity="0.9"/><circle cx="7.5" cy="9.5" r="4" fill="#2040f0" opacity="0.9"/></svg>
 <svg style="left:261px;top:64.4px" width="9" height="6"><path d="M0.5 0.5L4.5 4.5L8.5 0.5" fill="none" stroke="#555"/></svg>
 <div class="row" style="top:76px;height:13.4px;background:#fff"></div>
 <div class="pk" style="top:78.6px;font-size:9.1px">Show name (in 3D)</div>
 <svg style="left:93px;top:77.2px" width="11" height="11"><rect x="0.5" y="0.5" width="10" height="10" rx="2" fill="#fff" stroke="#555"/></svg>
 <div class="row" style="top:89.4px;height:36.6px;background:#f3f3f3"></div>
 <div class="pk" style="top:103.6px;font-size:9.1px">Box dimensions</div>
 <div class="pv" style="top:91.9px;font-size:8.9px">X: 269.872 (-134.941 : 134.931)</div>
 <div class="pv" style="top:103.6px;font-size:8.9px">Y: 319.08 (-159.537 : 159.542)</div>
 <div class="pv" style="top:115.2px;font-size:8.9px">Z: 74.3369 (304.513 : 378.85)</div>
 <div class="row" style="top:126px;height:37.0px;background:#fff"></div>
 <div class="pk" style="top:140.3px;font-size:9.1px">Shifted box center</div>
 <div class="pv" style="top:128.7px;font-size:8.9px">X: -0.00478363</div>
 <div class="pv" style="top:140.3px;font-size:8.9px">Y: 0.00245667</div>
 <div class="pv" style="top:152.1px;font-size:8.9px">Z: 341.681</div>
 <div class="row" style="top:163px;height:36.4px;background:#f3f3f3"></div>
 <div class="pk" style="top:177.1px;font-size:9.1px">Global box center</div>
 <div class="pv" style="top:165.4px;font-size:8.9px">X: 452963.145216</div>
 <div class="pv" style="top:177.1px;font-size:8.9px">Y: 5117479.432457</div>
 <div class="pv" style="top:188.8px;font-size:8.9px">Z: 341.681152</div>
 <div class="row" style="top:199.4px;height:14.0px;background:#fff"></div>
 <div class="pk" style="top:202.2px;font-size:9.1px">Info</div>
 <div class="pv" style="top:202.2px;font-size:8.9px">Object ID: 260 - Children: 1</div>
 <div class="row" style="top:213.4px;height:17.6px;background:#f3f3f3"></div>
 <div class="a" style="left:89.5px;top:213.9px;width:182.5px;height:17.1px;background:#fdfdfd;border:1px solid #e3e3e3"></div>
 <div class="pk" style="top:218.1px;font-size:9.1px">Current Display</div>
 <div class="pv" style="top:218.1px;font-size:8.9px">3D View 1</div>
 <svg style="left:261px;top:220.4px" width="9" height="6"><path d="M0.5 0.5L4.5 4.5L8.5 0.5" fill="none" stroke="#555"/></svg>
 <div class="row" style="top:231px;height:13.6px;background:#a9a9a9"></div>
 <div class="pk" style="left:1.5px;top:233.6px;color:#e4e4e4;font-size:9.6px">Cloud</div>
 <div class="row" style="top:244.6px;height:14.0px;background:#f3f3f3"></div>
 <div class="pk" style="top:247.5px;font-size:9.1px">Points</div>
 <div class="pv" style="top:247.5px;font-size:8.9px">18,222,796</div>
 <div class="row" style="top:258.6px;height:12.8px;background:#fff"></div>
 <div class="pk" style="top:260.8px;font-size:9.1px">Global shift</div>
 <div class="pv" style="top:260.8px;font-size:8.9px">(-452963.15;-5117479.43;0.00)</div>
 <div class="a" style="left:89.5px;top:0;width:1px;height:17.4px;background:#ececec"></div>
 <div class="a" style="left:272px;top:0;width:14px;height:274px;background:#f0f0f0"></div>
 <div class="a" style="left:278.5px;top:13px;width:2px;height:84px;background:#8a8a8a"></div>
</div>
<!-- Console -->
<div class="hdr" style="left:27px;top:685.5px;width:1423px;height:14.5px"></div>
<div class="t" style="left:30.5px;top:688.5px;font-size:9.6px;color:#333">Console</div>
<svg style="left:1420px;top:689px" width="9" height="8"><rect x="0.5" y="2.5" width="6" height="5" fill="none" stroke="#444"/><path d="M2.5 0.5H8.5V5" fill="none" stroke="#444"/></svg>
<svg style="left:1437px;top:689px" width="8" height="8"><path d="M0.5 0.5L7.5 7.5M7.5 0.5L0.5 7.5" stroke="#333" stroke-width="1.3"/></svg>
<div class="a" style="left:33px;top:709px;width:1411px;height:76px;border:1px solid #a4a4a4;background:#f0f0f0;overflow:hidden">
 <div class="a" style="left:0;top:0;width:1396px;height:13.5px;background:#fff"></div>
 <div class="a" style="left:0;top:13.5px;width:1396px;height:13.5px;background:#f3f3f3"></div>
 <div class="a" style="left:0;top:27px;width:1396px;height:13.5px;background:#fff"></div>
 <div class="a" style="left:0;top:40.5px;width:1396px;height:13.5px;background:#f3f3f3"></div>
 <div class="a" style="left:0;top:54px;width:1396px;height:6.5px;background:#fff"></div>
 <div class="con" style="top:3.5px;color:#a03535;letter-spacing:-0.2px">[17:37:07] [LAS] Cloud has been re-centered! Translation: (-452963.15 ; -5117479.43 ; 0.00)</div>
 <div class="con" style="top:16.5px;color:#262626;letter-spacing:-0.19px">[17:37:10] [LAS] File loaded in 0m4s111ms</div>
 <div class="con" style="top:29.5px;color:#262626">[17:37:10] [I/O] File 'E:/Dron/2025/ardusimple/tutorial_1/point_cloud.las' loaded successfully</div>
 <div class="con" style="top:43px;color:#d23a3a">[17:49:00] Define and/or close the segmentation polygon first! (right click to close)</div>
 <div class="a" style="left:15px;top:65.8px;width:947px;height:2px;background:#8e8e8e"></div>
 <div class="a" style="left:1402px;top:32px;width:2px;height:14px;background:#8e8e8e"></div>
</div>
<!-- right toolbar -->
<div class="a" style="left:1451px;top:62px;width:1px;height:619px;background:#dfe9f2"></div>
<div class="hdots" style="left:1455px;top:65px;width:35px"></div>
<div class="a" style="left:1452px;top:140px;width:48px;height:1px;background:#d0d0d0"></div>
<div class="hdots" style="left:1455px;top:144px;width:35px"></div>
<div class="a" style="left:1452px;top:790px;width:48px;height:1px;background:#d6d6d6"></div>
<svg style="left:1465.0px;top:70.5px" width="20" height="20" viewBox="0 0 20 20"><circle cx="10" cy="10" r="8" fill="none" stroke="#8c8c8c" stroke-width="2.6"/><path d="M5 14L15 6" stroke="#8c8c8c" stroke-width="3"/></svg>
<svg style="left:1465.0px;top:95.0px" width="20" height="20" viewBox="0 0 20 20"><rect x="2" y="2" width="16" height="16" fill="#9a9a9a"/><path d="M12 3Q6 6 8 14" fill="none" stroke="#cfcfcf" stroke-width="1.3"/><text x="10" y="17.5" font-size="5.5" font-weight="bold" text-anchor="middle" fill="#eee" font-family="Liberation Sans">CDL</text></svg>
<svg style="left:1465.0px;top:118.0px" width="20" height="20" viewBox="0 0 20 20"><rect x="2" y="2" width="16" height="16" fill="#9a9a9a"/><path d="M12 3Q6 6 8 14" fill="none" stroke="#cfcfcf" stroke-width="1.3"/><text x="10" y="17.5" font-size="5.5" font-weight="bold" text-anchor="middle" fill="#eee" font-family="Liberation Sans">C2C</text></svg>
<svg style="left:1465.0px;top:151.0px" width="20" height="20" viewBox="0 0 20 20"><rect x="3" y="7" width="15" height="11" fill="#8f8f8f"/><path d="M3 4L17 1L18 5L3 7Z" fill="#a5a5a5"/><path d="M6 3L8 6M10 2L12 5M14 2L15 5" stroke="#eee"/><rect x="3" y="9" width="15" height="3" fill="#b8b8b8"/></svg>
<svg style="left:1465.0px;top:174.0px" width="20" height="20" viewBox="0 0 20 20"><path d="M10 1V11" stroke="#9a9a9a" stroke-width="1.5"/><path d="M7 11H12L14 18H6Z" fill="#b8b8b8"/></svg>
<svg style="left:1465.0px;top:197.4px" width="20" height="20" viewBox="0 0 20 20"><rect x="2" y="2" width="16" height="16" rx="2" fill="#f0f0f0" stroke="#8a8a8a" stroke-width="1.5"/><circle cx="10" cy="10" r="6.5" fill="#fff" stroke="#8a8a8a" stroke-width="1.2"/><path d="M6 15L14 5" stroke="#7a7a7a" stroke-width="1.2"/><path d="M10 10L14 5L11 11Z" fill="#333"/></svg>
<svg style="left:1465.0px;top:220.6px" width="20" height="20" viewBox="0 0 20 20"><path d="M10 2L17 5V10Q17 16 10 18Q3 16 3 10V5Z" fill="#9a9a9a"/><path d="M10 5L14 7V10Q14 14 10 15Z" fill="#c0c0c0"/></svg>
<div class="t" style="left:1457px;top:246.5px;font-size:9px;color:#6e6e6e">CSF Filter</div>
<svg style="left:1465.0px;top:261.0px" width="20" height="20" viewBox="0 0 20 20"><path d="M6 3H14M11 1L14 3L11 5" fill="none" stroke="#333" stroke-width="1"/><text x="10" y="18" font-size="11" text-anchor="middle" fill="#333" font-family="Liberation Sans">N</text></svg>
<svg style="left:1465.0px;top:282.5px" width="20" height="20" viewBox="0 0 20 20"><path d="M3 7Q4 2 10 2Q17 3 17 9Q17 14 12 15H5Q3 12 3 7Z" fill="#a8a8a8"/><text x="10" y="17" font-size="5" font-weight="bold" text-anchor="middle" fill="#333" font-family="Liberation Sans">HPR</text></svg>
<svg style="left:1465.0px;top:306.0px" width="20" height="20" viewBox="0 0 20 20"><text x="10" y="6" font-size="5" text-anchor="middle" fill="#888" font-family="Liberation Sans">M3C2</text><path d="M2 12Q6 8 10 12T18 12" fill="none" stroke="#999" stroke-width="1.5"/><path d="M4 10V18M8 11V18M12 11V18M16 10V18" stroke="#aaa"/></svg>
<svg style="left:1465.0px;top:329.7px" width="20" height="20" viewBox="0 0 20 20"><path d="M10 2L17 5V10Q17 16 10 18Q3 16 3 10V5Z" fill="#8a8a8a"/><path d="M10 5L14 7V10Q14 14 10 15Z" fill="#b0b0b0"/></svg>
<svg style="left:1465.0px;top:353.4px" width="20" height="20" viewBox="0 0 20 20"><rect x="2" y="2" width="16" height="16" fill="#9c9c9c"/><path d="M2 8Q6 3 10 8T18 6" fill="none" stroke="#ddd"/><text x="10" y="17" font-size="6" font-weight="bold" text-anchor="middle" fill="#eee" font-family="Liberation Sans">RPU</text></svg>
<svg style="left:1465.0px;top:376.8px" width="20" height="20" viewBox="0 0 20 20"><path d="M10 2L18 8L15 17H5L2 8Z" fill="#9a9a9a"/></svg>
<svg style="left:1465.0px;top:400.6px" width="20" height="20" viewBox="0 0 20 20"><path d="M3 10Q4 3 10 3Q16 4 16 10Z" fill="#9a9a9a"/><circle cx="13" cy="7" r="3" fill="#b8b8b8"/><text x="10" y="18" font-size="6.5" font-weight="bold" text-anchor="middle" fill="#444" font-family="Liberation Sans">R3D</text></svg>
<svg style="left:1465.0px;top:424.0px" width="20" height="20" viewBox="0 0 20 20"><circle cx="8" cy="8" r="4" fill="none" stroke="#555" stroke-width="2.5" stroke-dasharray="2 1.2"/><circle cx="13" cy="14" r="3" fill="none" stroke="#555" stroke-width="2" stroke-dasharray="1.5 1"/><path d="M2 2V18M18 2V18" stroke="#bbb" stroke-dasharray="1 2"/></svg>
<svg style="left:1465.0px;top:447.7px" width="20" height="20" viewBox="0 0 20 20"><path d="M2 6L10 2L18 6L10 10Z" fill="#8a8a8a"/><path d="M2 10L10 14L18 10M2 14L10 18L18 14" fill="none" stroke="#8a8a8a" stroke-width="1.6"/></svg>
<svg style="left:1465.0px;top:471.0px" width="20" height="20" viewBox="0 0 20 20"><ellipse cx="10" cy="10" rx="8" ry="4" fill="none" stroke="#a8a8a8" stroke-width="1.2"/></svg>
<svg style="left:1465.0px;top:494.4px" width="20" height="20" viewBox="0 0 20 20"><path d="M4 17V9Q4 3 10 3Q16 3 16 9V17H13V9Q13 6 10 6Q7 6 7 9V17Z" fill="#444"/></svg>
<svg style="left:1465.0px;top:517.4px" width="20" height="20" viewBox="0 0 20 20"><path d="M7 18L5 11L8 10V4Q9 2 10 4V9L15 10L14 18Z" fill="none" stroke="#777" stroke-width="1.2"/><path d="M2 2V18M18 2V18" stroke="#bbb" stroke-dasharray="1 2"/></svg>
<svg style="left:1465.0px;top:542.0px" width="20" height="20" viewBox="0 0 20 20"><path d="M3 12Q3 6 8 7Q10 3 14 6Q18 6 17 12Z" fill="none" stroke="#999"/><rect x="2" y="12" width="16" height="5" fill="none" stroke="#999"/></svg>
<svg style="left:1465.0px;top:564.0px" width="20" height="20" viewBox="0 0 20 20"><path d="M10 1L13 6H7ZM5 7L8 12H2ZM15 7L18 12H12ZM10 11L13 16H7ZM5 13L8 18H2ZM15 13L18 18H12Z" fill="#555"/></svg>
<!-- 3D view -->
<div id="view" class="a"></div>
<svg style="left:330px;top:62px" width="1121" height="619" viewBox="330 62 1121 619">
 <defs>
  <linearGradient id="lg" gradientUnits="userSpaceOnUse" x1="0" y1="62" x2="0" y2="681"><stop offset="0" stop-color="#9ed69a"/><stop offset="0.45" stop-color="#90bc72"/><stop offset="1" stop-color="#b8b872"/></linearGradient>
 </defs>
 <path d="M364 62L342 681" fill="none" stroke="url(#lg)" stroke-width="1.4"/>
 <path d="M382 62L361 681" fill="none" stroke="url(#lg)" stroke-width="1.4"/>
 <path d="M1311.2 62L1288.6 681" fill="none" stroke="url(#lg)" stroke-width="1.4"/>
 <path d="M1329.8 62L1307 681" fill="none" stroke="url(#lg)" stroke-width="1.4"/>
</svg>
<svg style="left:0;top:0" width="1500" height="806" viewBox="0 0 1500 806">
 <defs>
  <clipPath id="pc"><path id="pcp" d="M946 114L1059.4 389.4L1046.5 426.5L1043 449L1044.8 491L985 497.4L927 512L898 529.3L825.3 563.7L754 566L760 521.3L717.7 515.3L708.4 489.2L628.4 494.8L602.3 488.5L604.2 436.4L590.4 379.8L760 332L787.8 322L815.6 309L841.4 291L861 267.3L877 249.5L887 227.6L897 197.9L895.6 174.7L892.1 160.8L875.6 140.8Z"/></clipPath>
  <filter id="bl8" x="-50%" y="-50%" width="200%" height="200%"><feGaussianBlur stdDeviation="8"/></filter>
  <filter id="bl5" x="-50%" y="-50%" width="200%" height="200%"><feGaussianBlur stdDeviation="5"/></filter>
  <filter id="bl3" x="-50%" y="-50%" width="200%" height="200%"><feGaussianBlur stdDeviation="3"/></filter>
  <filter id="bl2" x="-50%" y="-50%" width="200%" height="200%"><feGaussianBlur stdDeviation="1.5"/></filter>
  <filter id="bl1" x="-50%" y="-50%" width="200%" height="200%"><feGaussianBlur stdDeviation="0.8"/></filter>
  <mask id="rubm" maskUnits="userSpaceOnUse" x="560" y="90" width="520" height="500"><path d="M860 95L958 95L992 212L1012 295L1032 372L1000 350L960 352L925 360L885 378L840 400L795 425L765 445L745 435L752 402L772 365L795 325L805 305L830 270L870 240L900 180L880 140Z" fill="#fff" filter="url(#bl5)"/></mask>
  <filter id="speck" x="0" y="0" width="100%" height="100%"><feTurbulence type="fractalNoise" baseFrequency="0.42" numOctaves="2" seed="7"/><feColorMatrix type="matrix" values="0 0 0 1 0  0 0 0 1 0  0 0 0 1 0  0 0 0 0 1"/><feComponentTransfer><feFuncR type="linear" slope="2.8" intercept="-0.88"/><feFuncG type="linear" slope="2.8" intercept="-0.86"/><feFuncB type="linear" slope="2.8" intercept="-0.9"/></feComponentTransfer><feGaussianBlur stdDeviation="0.7"/></filter>
  <filter id="fine" x="0" y="0" width="100%" height="100%"><feTurbulence type="fractalNoise" baseFrequency="0.35" numOctaves="2" seed="19"/><feColorMatrix type="matrix" values="0 0 0 1 0  0 0 0 1 0  0 0 0 1 0  0 0 0 0 1"/><feComponentTransfer><feFuncR type="linear" slope="2" intercept="-0.5"/><feFuncG type="linear" slope="2" intercept="-0.52"/><feFuncB type="linear" slope="2" intercept="-0.56"/></feComponentTransfer><feGaussianBlur stdDeviation="0.7"/></filter>
 </defs>
 <g clip-path="url(#pc)">
  <rect x="580" y="110" width="490" height="470" fill="#a69d80"/>
  <!-- left lobe -->
  <path d="M585 370L770 325L790 380L740 470L700 500L590 500Z" fill="#9a9274" filter="url(#bl8)"/>
  <path d="M585 375L700 345L690 400L620 425L590 425Z" fill="#8e876b" filter="url(#bl8)"/>
  <path d="M600 450L700 425L730 470L690 500L600 500Z" fill="#a8a088" filter="url(#bl8)"/>
  <!-- lower region light beige -->
  <path d="M730 480L830 445L912 428L915 480L875 545L820 575L745 575Z" fill="#c8c3b0" filter="url(#bl8)"/>
  <!-- right sandy -->
  <path d="M940 400L1000 370L1065 385L1050 500L930 520L950 450Z" fill="#ae9f7e" filter="url(#bl8)"/>
  <!-- road -->
  <path d="M640 462Q700 458 745 447Q790 436 814 424Q860 408 900 403Q928 404 934 425Q938 455 914 490Q895 520 878 542" fill="none" stroke="#b3a785" stroke-width="14" opacity="0.6" filter="url(#bl3)"/>
  <!-- rubble -->
  <g mask="url(#rubm)">
   <rect x="740" y="100" width="320" height="370" fill="#999b8e"/>
   <rect x="740" y="100" width="320" height="370" filter="url(#speck)" opacity="0.45"/>
  </g>
  <mask id="rubm2" maskUnits="userSpaceOnUse" x="560" y="90" width="520" height="500"><path d="M700 492L750 472L820 447L868 428L872 440L820 470L790 492L770 520L740 525L712 520Z" fill="#fff" filter="url(#bl3)"/></mask>
  <g mask="url(#rubm2)">
   <rect x="690" y="420" width="200" height="110" fill="#a29e93"/>
   <rect x="690" y="420" width="200" height="110" filter="url(#speck)" opacity="0.38"/>
  </g>
  <!-- lighter strip along right edge of neck -->
  <path d="M955 140L965 125L1062 390L1032 385L985 255Z" fill="#b8ae94" opacity="0.85" filter="url(#bl5)"/>
  <path d="M880 120L946 110L990 225L935 240L900 220Z" fill="#c2bcac" opacity="0.45" filter="url(#bl8)"/>
  <!-- darker middle zone in neck -->
  <path d="M895 300L975 275L1005 335L945 352L885 372Z" fill="#6a665d" opacity="0.35" filter="url(#bl8)"/>
  <!-- dark streaks -->
  <path d="M800 372L860 345L920 325L960 315L962 320L922 332L862 352L803 380Z" fill="#45423b" opacity="0.3" filter="url(#bl2)"/>
  <path d="M762 425L830 395L900 362L990 340L992 345L903 369L835 402L767 433Z" fill="#3f3d37" opacity="0.45" filter="url(#bl2)"/>
  <path d="M709 484L798 452L870 426L872 431L800 458L712 490Z" fill="#3d3d35" opacity="0.5" filter="url(#bl2)"/>
  <path d="M733 519L810 488L864 480L866 485L812 494L736 525Z" fill="#4d5040" opacity="0.4" filter="url(#bl2)"/>
  <path d="M729 345L738 343L743 382L733 385Z" fill="#5f5846" opacity="0.55" filter="url(#bl2)"/>
  <path d="M747 384L752 374L760 372L766 366L776 368L783 377L779 386L772 390L768 397L756 396L749 392Z" fill="#3a3732" opacity="0.85" filter="url(#bl1)"/>
  <!-- pinkish patches -->
  <ellipse cx="860" cy="452" rx="22" ry="5" fill="#b08a80" opacity="0.35" filter="url(#bl3)"/>
  <!-- dark brown patch -->
  <ellipse cx="989" cy="396" rx="21" ry="11" fill="#5a4c36" opacity="0.8" filter="url(#bl3)"/>
  <path d="M1003 350L1020 372L1015 378L998 360Z" fill="#5a4c36" opacity="0.6" filter="url(#bl3)"/>
  <!-- white streak -->
  <path d="M900 368Q908 360 918 362Q928 358 936 366L932 376Q924 386 921 400L919 420L920 440Q925 446 923 455L912 456Q908 448 912 440L912 420L911 400Q905 388 900 368Z" fill="#f2f2f0" filter="url(#bl1)"/>
  <rect x="580" y="110" width="490" height="470" filter="url(#fine)" opacity="0.1"/>
 </g>
 <use href="#pcp" fill="none" stroke="#e8e8e8" stroke-width="1.2"/>
 <!-- red box -->
 <rect x="556.5" y="106" width="534" height="472.5" fill="none" stroke="#e2263a" stroke-width="3.6"/>
 <!-- cursor circle -->
 <circle cx="1033.5" cy="354" r="30.5" fill="none" stroke="#b3202a" stroke-width="1.2"/>
 <path d="M1033 355L1033 368L1036 365L1038.5 370L1040 369L1037.5 364.5L1041.5 364.5Z" fill="#fff" stroke="#333" stroke-width="0.6"/>
 <!-- scale bar -->
 <path d="M1115 649.5H1378.5M1115 646V653M1378.5 646V653" stroke="#c4c4c4" stroke-width="1.2"/>
 <text x="1246.5" y="668" font-size="10" text-anchor="middle" fill="#c8c8c8" font-family="Liberation Sans">75</text>
 <!-- trihedron -->
 <path d="M1415.5 649.5H1435.5" stroke="#e04020" stroke-width="2.2"/>
 <path d="M1416 650V630.5" stroke="#40d040" stroke-width="2.6"/>
 <path d="M1414.8 650V642" stroke="#50b0e0" stroke-width="1.8"/>
 <text x="1415.5" y="626" font-size="8.5" text-anchor="middle" fill="#88b078" font-family="Liberation Sans">Y</text>
 <text x="1441.5" y="653" font-size="8.5" text-anchor="middle" fill="#b03a28" font-family="Liberation Sans">X</text>
 <text x="1411.5" y="638" font-size="8.5" text-anchor="middle" fill="#5a90c0" font-family="Liberation Sans">Z</text>
 <!-- overlay texts -->
 <text x="889.5" y="79.5" font-size="9.9" text-anchor="middle" fill="#e6f0f8" font-family="Liberation Sans">Segmentation [PAUSED]</text>
 <text x="889" y="95" font-size="9.9" text-anchor="middle" fill="#e6f0f8" font-family="Liberation Sans">Unpause to segment again</text>
</svg>
<!-- segmentation toolbar -->
<div class="a" style="left:1125px;top:66px;width:322px;height:20px;background:#f2f5f8"></div>
<div class="a" style="left:1129px;top:68px;width:16.5px;height:16px;background:#cce2f6;border:1px solid #7aa2cc;border-radius:3px"></div>
<div class="a" style="left:1134px;top:71.5px;width:2.5px;height:9px;background:#4d82cf"></div>
<div class="a" style="left:1138.5px;top:71.5px;width:2.5px;height:9px;background:#4d82cf"></div>
<div class="a" style="left:1153.5px;top:68.5px;width:24px;height:15.5px;background:#fdfdfd;border-radius:3px"></div>
<svg style="left:1155.5px;top:70px" width="13" height="13"><path d="M6.5 0.8L2.5 7L8 6.5L4.5 12.5M3.5 5L11.5 11" fill="none" stroke="#6a6c98" stroke-width="1.5"/></svg>
<div class="a" style="left:1168.5px;top:69px;width:1px;height:14px;background:#d8d8d8"></div>
<svg style="left:1170px;top:74px" width="7" height="5"><path d="M0 0.5H6.5L3.25 4Z" fill="#111"/></svg>
<div class="a" style="left:1186.5px;top:68.5px;width:24.5px;height:15.5px;background:#fdfdfd;border-radius:3px"></div>
<svg style="left:1187.5px;top:69.5px" width="13" height="13"><path d="M4 1.5H9L11.5 6.5L9 11.5H4L1.5 6.5Z" fill="#e2e6f6" stroke="#4a5a8a" stroke-width="1"/></svg>
<div class="a" style="left:1202px;top:69px;width:1px;height:14px;background:#d8d8d8"></div>
<svg style="left:1203.5px;top:74px" width="7" height="5"><path d="M0 0.5H6.5L3.25 4Z" fill="#111"/></svg>
<div class="a" style="left:1221px;top:68.5px;width:16px;height:15.5px;background:#f8f8f8;border-radius:3px"></div>
<svg style="left:1223px;top:70px" width="12" height="12"><path d="M6 1L11 4.8L9.1 10.6H2.9L1 4.8Z" fill="#ee2a10" stroke="#6a5a10" stroke-width="0.9"/></svg>
<div class="a" style="left:1245.5px;top:69px;width:13.5px;height:13.5px;background:#e0381a"></div>
<svg style="left:1246.5px;top:70px" width="12" height="12"><path d="M6 1.2L10.7 4.8L8.9 10.4H3.1L1.3 4.8Z" fill="#fdfbe8" stroke="#6a5a10" stroke-width="0.8"/></svg>
<div class="a" style="left:1270px;top:68.5px;width:14.5px;height:15.5px;background:#fafafa;border-radius:3px"></div>
<svg style="left:1271px;top:70px" width="12" height="12"><circle cx="6.5" cy="6.5" r="4.2" fill="#b4b4b4" stroke="#555" stroke-width="1"/><circle cx="6.5" cy="6.5" r="1.8" fill="#777"/><path d="M1 3L3.5 2L3 5" fill="none" stroke="#333" stroke-width="1"/></svg>
<div class="a" style="left:1293px;top:68.5px;width:15px;height:15.5px;background:#fafafa;border-radius:3px"></div>
<svg style="left:1294.5px;top:70px" width="12" height="12"><path d="M4.5 1L3 11M8.5 1L7 11M1 4H11M0.5 8H10.5" stroke="#111" stroke-width="1.6"/></svg>
<div class="a" style="left:1318px;top:68.5px;width:15px;height:15.5px;background:#fafafa;border-radius:3px"></div>
<svg style="left:1318.5px;top:69px" width="14" height="14"><path d="M8 3H2.5V12.5H11V9" fill="none" stroke="#111" stroke-width="1.6"/><path d="M5 9Q6 5 10 5V3L13.5 6L10 9V7Q7 7 5 9Z" fill="#111"/></svg>
<div class="a" style="left:1341px;top:68px;width:21px;height:16.5px;background:#f9fbfd;border:1px solid #7fb0e0;border-radius:3px"></div>
<svg style="left:1345.5px;top:70px" width="12" height="12"><circle cx="6" cy="6" r="4" fill="none" stroke="#b0b0b0" stroke-width="2.6" stroke-dasharray="1.6 1"/><circle cx="6" cy="6" r="1.8" fill="#f9fbfd"/></svg>
<div class="a" style="left:1370px;top:68.5px;width:15px;height:15.5px;background:#fafafa;border-radius:3px"></div>
<svg style="left:1371px;top:70px" width="13" height="12"><path d="M1.5 6.5L5 10L11.5 2" fill="none" stroke="#2a9a2a" stroke-width="2.2"/></svg>
<div class="a" style="left:1394.5px;top:68.5px;width:15px;height:15.5px;background:#fafafa;border-radius:3px"></div>
<svg style="left:1395px;top:69.5px" width="14" height="14"><rect x="1" y="1" width="6" height="9" fill="#e8d070"/><ellipse cx="8" cy="5" rx="4.5" ry="2" fill="#5f6a50"/><rect x="3.5" y="5" width="9" height="6" fill="#6f7a5f"/><ellipse cx="8" cy="11" rx="4.5" ry="2" fill="#3a4030"/><path d="M10 9L13.5 11L10 13Z" fill="#111"/></svg>
<div class="a" style="left:1418.5px;top:68.5px;width:14.5px;height:15.5px;background:#fafafa;border-radius:3px"></div>
<svg style="left:1422px;top:72px" width="8" height="8"><path d="M1 1L7 7M7 1L1 7" stroke="#8a2a3a" stroke-width="1.8"/></svg>
<div class="a" style="left:1216.5px;top:61.5px;width:25.5px;height:30px;border:3px solid #e0202c"></div>
</body></html>
